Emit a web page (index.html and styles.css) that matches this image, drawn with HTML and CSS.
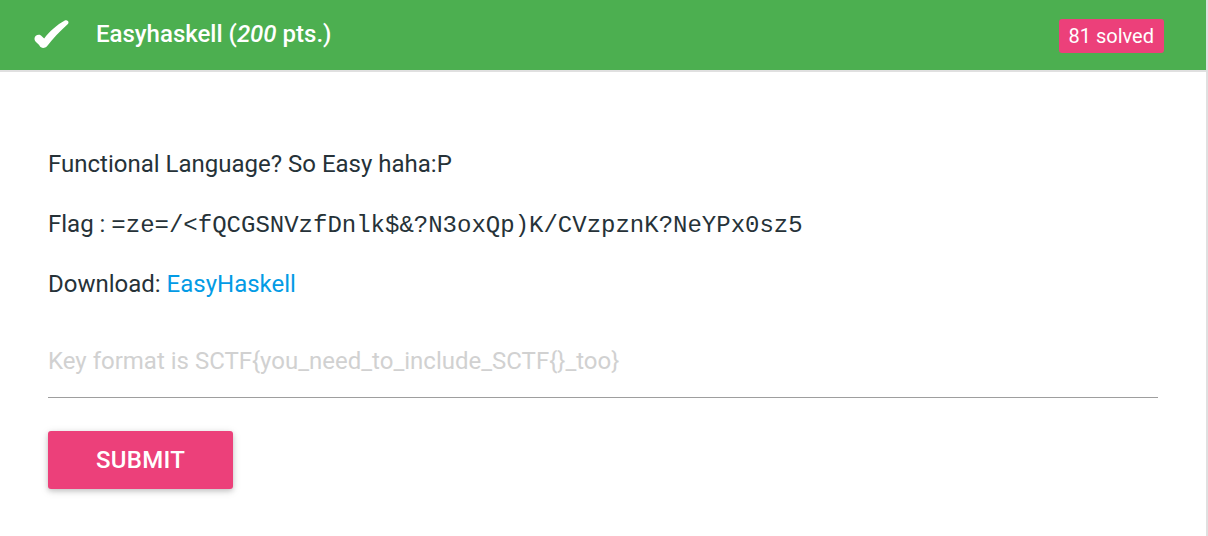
FILE: index.html
```html
<!DOCTYPE html>
<html lang="en">
<head>
<meta charset="utf-8">
<title>Easyhaskell</title>
<link rel="stylesheet" href="styles.css">
</head>
<body>
<div class="card">
  <div class="card-header">
    <svg class="check" width="35" height="28" viewBox="0 0 35 28" aria-hidden="true">
      <path d="M0.5 19 C0.3 15 5.8 13.2 8 16.5 L10.2 18.6 C15.5 11.5 23 4.8 30.8 0.6 C33.4 -0.6 35.6 2 33.9 3.9 C26 10.8 18.5 19 13 26.2 C10.8 28.6 6.8 28.4 5.6 25.8 C4 23 0.7 22 0.5 19 Z" fill="#fff"/>
    </svg>
    <span class="title">Easyhaskell (<em>200</em> pts.)</span>
    <span class="badge">81 solved</span>
  </div>
  <div class="card-body">
    <p>Functional Language? So Easy haha:P</p>
    <p>Flag : <code class="flag">=ze=/&lt;fQCGSNVzfDnlk$&amp;?N3oxQp)K/CVzpznK?NeYPx0sz5</code></p>
    <p>Download: <a class="link" href="#">EasyHaskell</a></p>
    <div class="field">
      <input class="key-input" type="text" placeholder="Key format is SCTF{you_need_to_include_SCTF{}_too}">
    </div>
    <button class="btn" type="button">SUBMIT</button>
  </div>
</div>
</body>
</html>
```
FILE: styles.css
```css
html, body {
  margin: 0;
  padding: 0;
  background: #fff;
}

body {
  font-family: "Roboto", "Liberation Sans", sans-serif;
  color: #263238;
}

.card {
  width: 1208px;
  min-height: 536px;
  box-sizing: border-box;
  border-right: 2px solid #e0e0e0;
}

.card-header {
  display: flex;
  align-items: center;
  height: 70px;
  padding: 0 42px 0 34px;
  background: #4caf50;
  border-bottom: 2px solid #e0e0e0;
  color: #fff;
}

.check {
  display: block;
  flex: none;
  margin-top: -3px;
}

.title {
  margin-left: 27px;
  font-size: 24px;
  font-weight: 500;
  line-height: 30px;
  margin-top: -2px;
}

.title em {
  font-style: italic;
  font-weight: 500;
}

.badge {
  margin-left: auto;
  height: 34px;
  line-height: 34px;
  padding: 0 10px;
  border-radius: 3px;
  background: #ec407a;
  color: #fff;
  font-size: 20px;
  margin-top: 1px;
}

.card-body {
  padding: 77px 48px 40px;
}

.card-body p {
  margin: 0 0 30px;
  font-size: 24px;
  line-height: 30px;
}

.flag {
  font-family: "Liberation Mono", "Courier New", monospace;
  font-size: 24px;
  line-height: 1;
}

.link {
  color: #039be5;
  text-decoration: none;
}

.field {
  margin-top: 47px;
}

.key-input {
  display: block;
  width: 100%;
  box-sizing: border-box;
  margin: 0;
  padding: 0 0 21px;
  height: 52px;
  border: none;
  border-bottom: 1px solid #9e9e9e;
  outline: none;
  background: transparent;
  font-family: "Roboto", "Liberation Sans", sans-serif;
  font-size: 24px;
  line-height: 30px;
  color: #263238;
}

.key-input::placeholder {
  color: #d1d1d1;
  opacity: 1;
}

.btn {
  display: block;
  margin-top: 33px;
  height: 58px;
  padding: 0 48px;
  border: none;
  border-radius: 3px;
  background: #ec407a;
  color: #fff;
  font-family: "Roboto", "Liberation Sans", sans-serif;
  font-size: 24px;
  font-weight: 500;
  letter-spacing: 0.3px;
  box-shadow: 0 2px 5px rgba(0, 0, 0, 0.16), 0 2px 10px rgba(0, 0, 0, 0.12);
}
```
